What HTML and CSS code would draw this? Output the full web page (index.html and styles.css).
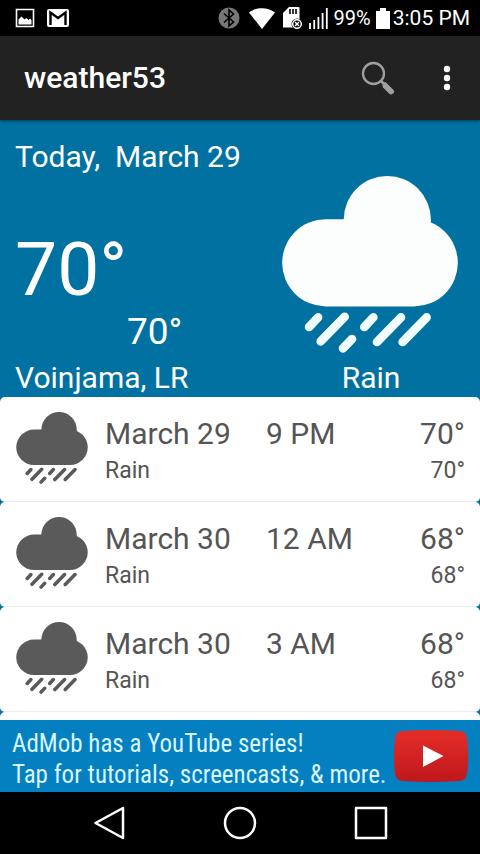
FILE: index.html
```html
<!DOCTYPE html>
<html lang="en">
<head>
<meta charset="utf-8">
<meta name="viewport" content="width=device-width, initial-scale=1">
<title>weather53</title>
<link rel="stylesheet" href="styles.css">
</head>
<body>
<svg class="defs" aria-hidden="true">
  <symbol id="rain" viewBox="66 48 528 532">
    <rect x="66" y="178" width="528" height="262" rx="131"/>
    <path d="M251 310V179a131 131 0 0 1 262 0v131z"/>
    <path class="drops" d="M147 502l27-29M182 545l72-74M249 566l27-28M313 502l27-29M351 547l72-74M428 547l72-74"/>
  </symbol>
</svg>
<div class="status">
  <svg class="s-photo" viewBox="0 0 20 20" aria-hidden="true"><path fill="none" stroke="#fff" stroke-width="1.6" d="M1.500 1.500h17v17h-17z"/><path fill="#fff" d="M3.500 16.500v-5l3-3 3 3 2-1.500 2 2 1.500-1.500 1.500 1.500v4.500z"/></svg>
  <svg class="s-mail" viewBox="0 0 22 18" aria-hidden="true"><rect width="22" height="18" rx="2" fill="#fff"/><path fill="none" stroke="#000" stroke-width="2.400" d="M3.500 16V3.500L11 9l7.500-5.500V16"/></svg>
  <span class="grow"></span>
  <svg class="s-bt" viewBox="0 0 22 22" aria-hidden="true"><circle cx="11" cy="11" r="10.500" fill="#777"/><path fill="none" stroke="#000" stroke-width="1.600" d="M6 6.500l9.500 8.500-4.500 4V3l4.500 4L6 15.500"/></svg>
  <svg class="s-wifi" viewBox="0 0 26 21" aria-hidden="true"><path fill="#fff" d="M0 4.500C7.500-1.200 18.500-1.200 26 4.500L13 21z"/></svg>
  <svg class="s-sd" viewBox="0 0 20 22" aria-hidden="true"><path fill="#fff" d="M6 0h9.500q1 0 1 1v19.500H0V6z"/><path stroke="#000" stroke-width="1.600" d="M7 2v5M10 2v5M13 2v5"/><circle cx="14" cy="17" r="5.500" fill="#000"/><circle cx="14" cy="17" r="4.300" fill="none" stroke="#fff" stroke-width="1.500"/><path stroke="#fff" stroke-width="1.500" d="M12 15l4 4M16 15l-4 4"/></svg>
  <svg class="s-signal" viewBox="0 0 19 21" aria-hidden="true"><path stroke="#fff" stroke-width="1.800" d="M1 21v-6M5.200 21v-9M9.400 21V9M13.600 21V5M17.800 21V0"/></svg>
  <span class="battery-text">99%</span>
  <svg class="s-battery" viewBox="0 0 14 21" aria-hidden="true"><path fill="#fff" d="M4 0h6v3h4v18H0V3h4z"/></svg>
  <time class="clock">3:05 PM</time>
</div>
<header class="appbar">
  <h1>weather53</h1>
  <button class="icon-btn" aria-label="Search"><svg class="search" viewBox="0 0 34 34"><circle cx="12.500" cy="12.500" r="10.500" fill="none" stroke="#a0a0a0" stroke-width="2.300"/><path stroke="#a0a0a0" stroke-width="2.500" d="M19.500 19.500l4 4"/><path fill="#a0a0a0" d="M21.500 24.500q0-3 3-3.500l8 8q1.500 2-.5 3.500-2 1.500-3.500.5l-6.500-6.500z"/></svg></button>
  <button class="icon-btn more" aria-label="More options"><svg class="dots" viewBox="0 0 8 26" fill="#fff"><circle cx="4" cy="4" r="3.200"/><circle cx="4" cy="13" r="3.200"/><circle cx="4" cy="22" r="3.200"/></svg></button>
</header>
<main class="content">
  <section class="today">
    <div class="now">
      <h2 class="label">Today,&nbsp; March 29</h2>
      <p class="high">70°</p>
      <p class="low">70°</p>
      <p class="label">Voinjama, LR</p>
    </div>
    <div class="sky">
      <svg class="sky-icon" aria-hidden="true"><use href="#rain"/></svg>
      <p class="label">Rain</p>
    </div>
  </section>
  <ul class="forecast">
    <li class="card">
      <svg class="card-icon" aria-hidden="true"><use href="#rain"/></svg>
      <div class="day"><p>March 29</p><p class="sub">Rain</p></div>
      <p class="hour">9 PM</p>
      <div class="temps"><p>70°</p><p class="sub">70°</p></div>
    </li>
    <li class="card">
      <svg class="card-icon" aria-hidden="true"><use href="#rain"/></svg>
      <div class="day"><p>March 30</p><p class="sub">Rain</p></div>
      <p class="hour">12 AM</p>
      <div class="temps"><p>68°</p><p class="sub">68°</p></div>
    </li>
    <li class="card">
      <svg class="card-icon" aria-hidden="true"><use href="#rain"/></svg>
      <div class="day"><p>March 30</p><p class="sub">Rain</p></div>
      <p class="hour">3 AM</p>
      <div class="temps"><p>68°</p><p class="sub">68°</p></div>
    </li>
    <li class="card"></li>
  </ul>
</main>
<a class="ad" href="#">
  <span class="ad-text">AdMob has a YouTube series!<br>Tap for tutorials, screencasts, &amp; more.</span>
  <svg class="play" viewBox="0 0 76 54" aria-hidden="true"><defs><linearGradient id="red" x2="0" y2="1"><stop stop-color="#e52d27"/><stop offset="1" stop-color="#bf171d"/></linearGradient></defs><path fill="url(#red)" d="M9 2Q38 0 67 2q6 .5 7 7 2 18 0 36-1 6-7 7-29 2-58 0-6-1-7-7-2-18 0-36 1-6.500 7-7z"/><path fill="#fff" d="M30 16.500l20.500 10.500L30 38z"/></svg>
</a>
<nav class="nav">
  <button aria-label="Back"><svg viewBox="0 0 34 34"><path d="M31 2v30L3.500 17z"/></svg></button>
  <button aria-label="Home"><svg viewBox="0 0 34 34"><circle cx="17" cy="17" r="15"/></svg></button>
  <button aria-label="Recent apps"><svg viewBox="0 0 34 34"><path d="M2 2h30v30H2z"/></svg></button>
</nav>
</body>
</html>
```
FILE: styles.css
```css
* {
  box-sizing: border-box;
}

body {
  display: flex;
  flex-direction: column;
  height: 100vh;
  margin: 0;
  background: #000;
  color: #fff;
  font-family: Roboto, "Liberation Sans", sans-serif;
  font-size: 30px;
  line-height: 36px;
}

h1, h2, p, ul {
  margin: 0;
  padding: 0;
  font-size: inherit;
  font-weight: 400;
}

button {
  padding: 0;
  border: 0;
  background: none;
}

svg {
  display: block;
  flex: none;
}

.defs {
  position: absolute;
  width: 0;
  height: 0;
}

.drops {
  fill: none;
  stroke: currentColor;
  stroke-width: 26px;
  stroke-linecap: round;
}

.status {
  display: flex;
  flex: none;
  align-items: center;
  height: 36px;
  padding: 0 10px 0 15px;
}

.grow {
  flex: 1;
}

.s-photo { width: 20px; height: 20px; margin-right: 12px; }
.s-mail { width: 22px; height: 18px; }
.s-bt { width: 22px; height: 22px; margin-right: 9px; }
.s-wifi { width: 26px; height: 21px; margin-right: 8px; }
.s-sd { width: 20px; height: 22px; margin-right: 6px; }
.s-signal { width: 19px; height: 21px; margin-right: 6px; }
.s-battery { width: 14px; height: 21px; margin: 0 3px 0 5px; }

.battery-text {
  font-size: 20px;
}

.clock {
  font-size: 21px;
}

.appbar {
  z-index: 1;
  display: flex;
  flex: none;
  align-items: center;
  height: 84px;
  padding-left: 24px;
  background: #222;
  box-shadow: 0 1px 3px rgba(0, 0, 0, 0.5);
}

.appbar h1 {
  flex: 1;
  font-weight: 500;
}

.icon-btn {
  display: grid;
  place-items: center;
  width: 72px;
  height: 72px;
}

.more {
  width: 66px;
}

.search { width: 34px; height: 34px; }
.dots { width: 8px; height: 26px; }

.content {
  flex: 1;
  min-height: 0;
  overflow: hidden;
  background: #0071a1;
}

.today {
  display: flex;
  justify-content: space-between;
  align-items: flex-end;
  padding: 19px 20px 1px 15px;
}

.high {
  margin-top: 52px;
  font-size: 75px;
  line-height: 84px;
}

.low {
  margin: 0 0 7px 112px;
  font-size: 37px;
  line-height: 42px;
}

.sky {
  text-align: center;
}

.sky-icon {
  width: 176px;
  height: 177px;
  margin: 0 2px 7px 0;
  fill: #fcfdfd;
  color: #f2fdfe;
}

.forecast {
  list-style: none;
}

.card {
  display: grid;
  grid-template-columns: 72px 144px 1fr auto;
  column-gap: 17px;
  height: 105px;
  padding: 15px 15px 0 16px;
  border-bottom: 1px solid #e9eef0;
  border-radius: 5px;
  background: #fff;
  color: #555;
}

.day, .hour, .temps {
  padding-top: 4px;
}

.temps {
  text-align: right;
}

.sub {
  font-size: 23px;
  line-height: 38px;
}

.card-icon {
  width: 72px;
  height: 72px;
  fill: #5a5a5a;
  color: #5a5a5a;
}

.ad {
  display: flex;
  flex: none;
  align-items: center;
  justify-content: space-between;
  height: 72px;
  padding: 0 11px 0 12px;
  background: #0480c1;
  color: #d8f5ff;
  text-decoration: none;
}

.ad-text {
  padding-top: 5px;
  font-family: "Roboto Condensed", Roboto, sans-serif;
  font-size: 25px;
  line-height: 31px;
  white-space: nowrap;
}

.play { width: 76px; height: 54px; }

.nav {
  display: flex;
  flex: none;
  justify-content: center;
  height: 62px;
}

.nav button {
  display: grid;
  place-items: center;
  width: 131px;
}

.nav svg {
  width: 34px;
  height: 34px;
  fill: none;
  stroke: #fff;
  stroke-width: 2.500px;
  stroke-linejoin: round;
}
```
